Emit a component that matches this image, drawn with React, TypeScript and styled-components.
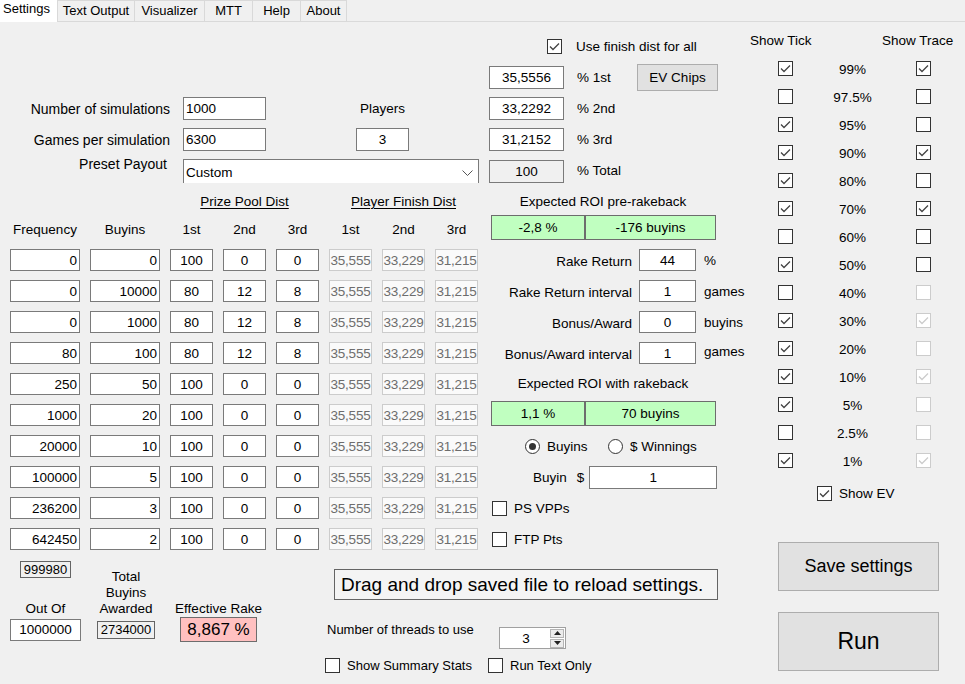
import React from "react";
import styled, { createGlobalStyle, css } from "styled-components";

const GlobalStyle = createGlobalStyle`
  html, body { margin: 0; padding: 0; background: #f0f0f0; }
  body { font-family: "Liberation Sans", Arial, sans-serif; font-size: 13.5px; color: #000; }
  * { box-sizing: border-box; }
`;

type Pos = { $r?: number; $c?: number; $span?: number };
const at = css<Pos>`
  ${(p) => (p.$r ? `grid-row: ${p.$r};` : "")}
  ${(p) => (p.$c ? `grid-column: ${p.$c} / span ${p.$span ?? 1};` : "")}
`;

const Window = styled.div`
  width: 965px;
  height: 684px;
  overflow: hidden;
  display: flex;
  flex-direction: column;
  background: #f0f0f0;
`;

/* ---------- tabs ---------- */
const TabStrip = styled.div`
  display: flex;
  height: 22px;
  flex: none;
`;
const Tab = styled.div<{ $active?: boolean; $w: number; $last?: boolean }>`
  width: ${(p) => p.$w}px;
  height: 22px;
  font-size: 13px;
  line-height: 16px;
  white-space: nowrap;
  ${(p) =>
    p.$active
      ? css`
          background: #fff;
          padding: 1px 0 0 3px;
        `
      : css`
          background: #f0f0f0;
          border: 1px solid #d9d9d9;
          border-right: ${p.$last ? "1px solid #d9d9d9" : "none"};
          text-align: center;
          padding-top: 2px;
        `}
`;
const TabFiller = styled.div`
  flex: 1;
  height: 22px;
  border-bottom: 1px solid #dadada;
`;

const Body = styled.div`
  display: flex;
  flex: 1;
`;
const Main = styled.div`
  width: 740px;
  display: flex;
  flex-direction: column;
`;

/* ---------- common controls ---------- */
const TextBox = styled.input<Pos & { $align?: string; $w?: number; $h?: number; $tone?: "readonly" | "disabled" }>`
  ${at}
  width: ${(p) => (p.$w ? `${p.$w}px` : "100%")};
  height: ${(p) => p.$h ?? 23}px;
  border: 1px solid #7a7a7a;
  background: #fff;
  font: inherit;
  color: #000;
  padding: 0 2px;
  margin: 0;
  text-align: ${(p) => p.$align ?? "left"};
  outline: none;
  align-self: center;
  ${(p) =>
    p.$tone === "readonly" &&
    css`
      background: #f0f0f0;
    `}
  ${(p) =>
    p.$tone === "disabled" &&
    css`
      background: #fafafa;
      border-color: #cccccc;
      color: #6d6d6d;
      padding: 0;
      letter-spacing: -0.2px;
    `}
`;

const BoxSq = styled.span<{ $disabled?: boolean }>`
  width: 15px;
  height: 15px;
  flex: none;
  border: 1px solid ${(p) => (p.$disabled ? "#cccccc" : "#333333")};
  background: #fff;
  display: inline-flex;
  align-items: center;
  justify-content: center;
`;
function Check({ on, disabled }: { on?: boolean; disabled?: boolean }) {
  return (
    <BoxSq $disabled={disabled}>
      {on && (
        <svg width="13" height="13" viewBox="0 0 13 13">
          <polyline
            points="2,6.5 5,9.5 11,3.5"
            fill="none"
            stroke={disabled ? "#cccccc" : "#444444"}
            strokeWidth="1.3"
          />
        </svg>
      )}
    </BoxSq>
  );
}

const RadioDot = styled.span<{ $on?: boolean }>`
  width: 15px;
  height: 15px;
  flex: none;
  border-radius: 50%;
  border: 1px solid #333;
  background: #fff;
  display: inline-flex;
  align-items: center;
  justify-content: center;
  &::after {
    content: "";
    width: 7px;
    height: 7px;
    border-radius: 50%;
    background: ${(p) => (p.$on ? "#333" : "transparent")};
  }
`;

const CheckLabel = styled.label<{ $w?: number; $size?: number }>`
  display: flex;
  align-items: center;
  gap: 7px;
  white-space: nowrap;
  ${(p) => (p.$w ? `width: ${p.$w}px;` : "")}
  ${(p) => (p.$size ? `font-size: ${p.$size}px;` : "")}
`;

const PushButton = styled.button<{ $w: number; $h: number; $size: number }>`
  width: ${(p) => p.$w}px;
  height: ${(p) => p.$h}px;
  background: #e1e1e1;
  border: 1px solid #adadad;
  font-family: inherit;
  font-size: ${(p) => p.$size}px;
  color: #000;
  padding: 0;
  margin: 0;
`;

/* ---------- top area ---------- */
const TopGrid = styled.div`
  display: grid;
  grid-template-columns: 183px 83px 90px 53px 80px 75px 73px 81px;
  grid-template-rows: 24px 23px 23px 23px 24px;
  row-gap: 8px;
  padding: 12px 0 7px;
  align-items: center;
`;
const FieldLabel = styled.div<Pos & { $pr?: number; $raise?: boolean }>`
  ${at}
  text-align: right;
  font-size: 14px;
  padding-right: ${(p) => p.$pr ?? 13}px;
  line-height: 16px;
  white-space: nowrap;
  ${(p) =>
    p.$raise &&
    css`
      align-self: start;
      margin-top: -3px;
    `}
`;
const UnitLabel = styled.div<Pos>`
  ${at}
  padding-left: 13px;
  line-height: 16px;
  white-space: nowrap;
`;
const CenterLabel = styled.div<Pos>`
  ${at}
  text-align: center;
  line-height: 16px;
  white-space: nowrap;
`;
const FinishAll = styled(CheckLabel)<Pos>`
  ${at}
  margin-left: 58px;
  gap: 14px;
`;
const Combo = styled.div<Pos>`
  ${at}
  width: 296px;
  height: 24px;
  align-self: start;
  background: #fff;
  border: 1px solid #7a7a7a;
  border-bottom: none;
  display: flex;
  align-items: center;
  justify-content: space-between;
  padding: 2px 5px 0 2px;
`;
const ButtonCell = styled.div<Pos>`
  ${at}
  display: flex;
  align-items: center;
`;

/* ---------- table + roi ---------- */
const TableGrid = styled.div`
  display: grid;
  grid-template-columns: 70px 70px 43px 43px 43px 43px 43px 43px 230px;
  grid-template-rows: 18px 20px repeat(10, 22px);
  column-gap: 10px;
  row-gap: 9px;
  padding: 3px 0 0 10px;
  height: 360px;
`;
const GroupHeader = styled.div<Pos>`
  ${at}
  text-align: center;
  line-height: 18px;
  text-decoration: underline;
  text-underline-offset: 2px;
  white-space: nowrap;
`;
const ColHeader = styled.div<Pos>`
  ${at}
  text-align: center;
  line-height: 20px;
  white-space: nowrap;
  display: flex;
  justify-content: center;
`;
const RoiTitle = styled.div<Pos>`
  ${at}
  text-align: center;
  line-height: 18px;
  white-space: nowrap;
  align-self: center;
`;
const RoiPair = styled.div<Pos>`
  ${at}
  display: flex;
  align-self: end;
  margin-left: 3px;
  height: 25px;
`;
const RoiValue = styled.div<{ $w: number }>`
  width: ${(p) => p.$w}px;
  height: 25px;
  background: #c0ffc0;
  border: 1px solid #6d6d6d;
  text-align: center;
  line-height: 23px;
`;
const RateRow = styled.div<Pos>`
  ${at}
  display: grid;
  grid-template-columns: 144px 57px auto;
  column-gap: 7px;
  align-items: center;
`;
const RateLabel = styled.div`
  text-align: right;
  white-space: nowrap;
  margin-top: 2px;
`;
const RateUnit = styled.div<{ $lift?: boolean }>`
  padding-left: 1px;
  white-space: nowrap;
  ${(p) => p.$lift && "margin-top: -4px;"}
`;
const RadioRow = styled.div<Pos>`
  ${at}
  display: flex;
  align-items: center;
  padding-left: 37px;
`;
const RadioOption = styled.label<{ $w?: number }>`
  display: flex;
  align-items: center;
  gap: 7px;
  white-space: nowrap;
  ${(p) => (p.$w ? `width: ${p.$w}px;` : "")}
`;
const BuyinRow = styled.div<Pos>`
  ${at}
  display: flex;
  align-items: center;
  padding-left: 45px;
`;
const BuyinText = styled.span<{ $ml?: number }>`
  margin-left: ${(p) => p.$ml ?? 0}px;
  margin-right: 5px;
`;
const OptionCheck = styled(CheckLabel)<Pos>`
  ${at}
  padding-left: 4px;
`;

/* ---------- bottom ---------- */
const BottomArea = styled.div`
  display: flex;
  flex: 1;
`;
const Totals = styled.div`
  display: grid;
  grid-template-columns: 71px 16px 58px 25px 77px;
  grid-template-rows: auto 25px;
  margin-left: 10px;
  padding-top: 11px;
  align-content: start;
`;
const TotalsHead = styled.div<Pos>`
  ${at}
  align-self: end;
  display: flex;
  flex-direction: column;
  align-items: center;
  line-height: 16px;
  white-space: nowrap;
  text-align: center;
`;
const CountBox = styled.div<Pos & { $w: number; $h: number; $mb?: number }>`
  ${at}
  width: ${(p) => p.$w}px;
  height: ${(p) => p.$h}px;
  border: 1px solid #646464;
  font-size: 13px;
  line-height: ${(p) => p.$h - 2}px;
  text-align: center;
  margin-bottom: ${(p) => p.$mb ?? 0}px;
  align-self: center;
`;
const RakeBox = styled.div<Pos>`
  ${at}
  width: 77px;
  height: 25px;
  background: #ffc0c0;
  border: 1px solid #6d6d6d;
  font-size: 17px;
  line-height: 23px;
  text-align: center;
  align-self: center;
`;
const CenterBlock = styled.div`
  margin-left: 68px;
  padding-top: 19px;
  display: flex;
  flex-direction: column;
  font-size: 13px;
`;
const DragBox = styled.div`
  margin-left: 9px;
  width: 384px;
  height: 31px;
  border: 1px solid #646464;
  background: #f4f4f4;
  font-size: 19px;
  line-height: 29px;
  padding-left: 6px;
  white-space: nowrap;
`;
const ThreadsRow = styled.div`
  display: flex;
  align-items: flex-start;
  margin-top: 22px;
  padding-left: 2px;
`;
const ThreadsLabel = styled.div`
  width: 172px;
  line-height: 16px;
  white-space: nowrap;
`;
const Spin = styled.div`
  margin-top: 5px;
  width: 67px;
  height: 22px;
  border: 1px solid #a0a0a0;
  background: #fff;
  display: flex;
  align-items: center;
  padding-right: 1px;
`;
const SpinText = styled.div`
  flex: 1;
  text-align: center;
  font-size: 13.5px;
  padding-left: 2px;
`;
const SpinButtons = styled.div`
  display: flex;
  flex-direction: column;
  gap: 1px;
`;
const SpinBtn = styled.div`
  width: 14px;
  height: 9px;
  background: #ececec;
  border: 1px solid #b5b5b5;
  display: flex;
  align-items: center;
  justify-content: center;
`;
const SummaryRow = styled.div`
  display: flex;
  margin-top: 9px;
  height: 15px;
`;

/* ---------- right panel ---------- */
const RightPanel = styled.div`
  width: 225px;
  display: flex;
  flex-direction: column;
`;
const TickHeader = styled.div`
  display: grid;
  grid-template-columns: 132px auto;
  padding: 11px 0 0 10px;
  line-height: 16px;
`;
const TickList = styled.div`
  margin-top: 5px;
  display: flex;
  flex-direction: column;
`;
const TickRow = styled.div`
  display: grid;
  grid-template-columns: 15px 123px 15px;
  padding-left: 38px;
  height: 28px;
  align-items: center;
`;
const PctLabel = styled.div`
  text-align: center;
  padding-right: 4px;
  margin-top: 2px;
`;
const ShowEv = styled(CheckLabel)`
  margin: 12px 0 0 77px;
  height: 15px;
`;
const RightButtons = styled.div`
  display: flex;
  flex-direction: column;
  padding-left: 38px;
  margin-top: 41px;
  gap: 21px;
`;

const rows: string[][] = [
  ["0", "0", "100", "0", "0"],
  ["0", "10000", "80", "12", "8"],
  ["0", "1000", "80", "12", "8"],
  ["80", "100", "80", "12", "8"],
  ["250", "50", "100", "0", "0"],
  ["1000", "20", "100", "0", "0"],
  ["20000", "10", "100", "0", "0"],
  ["100000", "5", "100", "0", "0"],
  ["236200", "3", "100", "0", "0"],
  ["642450", "2", "100", "0", "0"],
];

const ticks: [string, boolean, boolean, boolean][] = [
  ["99%", true, true, false],
  ["97.5%", false, false, false],
  ["95%", true, false, false],
  ["90%", true, true, false],
  ["80%", true, false, false],
  ["70%", true, true, false],
  ["60%", false, false, false],
  ["50%", true, false, false],
  ["40%", false, false, true],
  ["30%", true, true, true],
  ["20%", true, false, true],
  ["10%", true, true, true],
  ["5%", true, false, true],
  ["2.5%", false, false, true],
  ["1%", true, true, true],
];

const tabs = [
  { name: "Text Output", w: 77 },
  { name: "Visualizer", w: 70 },
  { name: "MTT", w: 48 },
  { name: "Help", w: 48 },
  { name: "About", w: 47 },
];

export default function App() {
  return (
    <>
      <GlobalStyle />
      <Window>
        <TabStrip>
          <Tab $active $w={57}>Settings</Tab>
          {tabs.map((t, i) => (
            <Tab key={t.name} $w={t.w} $last={i === tabs.length - 1}>
              {t.name}
            </Tab>
          ))}
          <TabFiller />
        </TabStrip>

        <Body>
          <Main>
            <TopGrid>
              <FinishAll $r={1} $c={6} $span={3}>
                <Check on />
                Use finish dist for all
              </FinishAll>

              <TextBox $r={2} $c={6} $align="center" value="35,5556" readOnly />
              <UnitLabel $r={2} $c={7}>% 1st</UnitLabel>
              <ButtonCell $r={2} $c={8}>
                <PushButton $w={81} $h={27} $size={13.5}>EV Chips</PushButton>
              </ButtonCell>

              <FieldLabel $r={3} $c={1}>Number of simulations</FieldLabel>
              <TextBox $r={3} $c={2} value="1000" readOnly />
              <CenterLabel $r={3} $c={4}>Players</CenterLabel>
              <TextBox $r={3} $c={6} $align="center" value="33,2292" readOnly />
              <UnitLabel $r={3} $c={7}>% 2nd</UnitLabel>

              <FieldLabel $r={4} $c={1}>Games per simulation</FieldLabel>
              <TextBox $r={4} $c={2} value="6300" readOnly />
              <TextBox $r={4} $c={4} $align="center" value="3" readOnly />
              <TextBox $r={4} $c={6} $align="center" value="31,2152" readOnly />
              <UnitLabel $r={4} $c={7}>% 3rd</UnitLabel>

              <FieldLabel $r={5} $c={1} $pr={16} $raise>Preset Payout</FieldLabel>
              <Combo $r={5} $c={2} $span={4}>
                <span>Custom</span>
                <svg width="11" height="6" viewBox="0 0 11 6">
                  <polyline points="0.5,0.5 5.5,5.5 10.5,0.5" fill="none" stroke="#555" strokeWidth="1" />
                </svg>
              </Combo>
              <TextBox $r={5} $c={6} $align="center" $tone="readonly" value="100" readOnly />
              <UnitLabel $r={5} $c={7}>% Total</UnitLabel>
            </TopGrid>

            <TableGrid>
              <GroupHeader $r={1} $c={3} $span={3}>Prize Pool Dist</GroupHeader>
              <GroupHeader $r={1} $c={6} $span={3}>Player Finish Dist</GroupHeader>
              {["Frequency", "Buyins", "1st", "2nd", "3rd", "1st", "2nd", "3rd"].map((h, i) => (
                <ColHeader key={i} $r={2} $c={i + 1}>
                  {h}
                </ColHeader>
              ))}
              {rows.map((r, ri) => (
                <React.Fragment key={ri}>
                  <TextBox $r={ri + 3} $c={1} $h={22} $align="right" value={r[0]} readOnly />
                  <TextBox $r={ri + 3} $c={2} $h={22} $align="right" value={r[1]} readOnly />
                  <TextBox $r={ri + 3} $c={3} $h={22} $align="center" value={r[2]} readOnly />
                  <TextBox $r={ri + 3} $c={4} $h={22} $align="center" value={r[3]} readOnly />
                  <TextBox $r={ri + 3} $c={5} $h={22} $align="center" value={r[4]} readOnly />
                  <TextBox $r={ri + 3} $c={6} $h={22} $align="center" $tone="disabled" value="35,555" readOnly />
                  <TextBox $r={ri + 3} $c={7} $h={22} $align="center" $tone="disabled" value="33,229" readOnly />
                  <TextBox $r={ri + 3} $c={8} $h={22} $align="center" $tone="disabled" value="31,215" readOnly />
                </React.Fragment>
              ))}

              <RoiTitle $r={1} $c={9}>Expected ROI pre-rakeback</RoiTitle>
              <RoiPair $r={2} $c={9}>
                <RoiValue $w={94}>-2,8 %</RoiValue>
                <RoiValue $w={131}>-176 buyins</RoiValue>
              </RoiPair>
              <RateRow $r={3} $c={9}>
                <RateLabel>Rake Return</RateLabel>
                <TextBox $h={22} $align="center" value="44" readOnly />
                <RateUnit>%</RateUnit>
              </RateRow>
              <RateRow $r={4} $c={9}>
                <RateLabel>Rake Return interval</RateLabel>
                <TextBox $h={22} $align="center" value="1" readOnly />
                <RateUnit>games</RateUnit>
              </RateRow>
              <RateRow $r={5} $c={9}>
                <RateLabel>Bonus/Award</RateLabel>
                <TextBox $h={22} $align="center" value="0" readOnly />
                <RateUnit>buyins</RateUnit>
              </RateRow>
              <RateRow $r={6} $c={9}>
                <RateLabel>Bonus/Award interval</RateLabel>
                <TextBox $h={22} $align="center" value="1" readOnly />
                <RateUnit $lift>games</RateUnit>
              </RateRow>
              <RoiTitle $r={7} $c={9}>Expected ROI with rakeback</RoiTitle>
              <RoiPair $r={8} $c={9}>
                <RoiValue $w={94}>1,1 %</RoiValue>
                <RoiValue $w={131}>70 buyins</RoiValue>
              </RoiPair>
              <RadioRow $r={9} $c={9}>
                <RadioOption $w={83}>
                  <RadioDot $on />
                  Buyins
                </RadioOption>
                <RadioOption>
                  <RadioDot />$ Winnings
                </RadioOption>
              </RadioRow>
              <BuyinRow $r={10} $c={9}>
                <BuyinText>Buyin</BuyinText>
                <BuyinText $ml={5}>$</BuyinText>
                <TextBox $w={128} $h={23} $align="center" value="1" readOnly />
              </BuyinRow>
              <OptionCheck $r={11} $c={9}>
                <Check />
                PS VPPs
              </OptionCheck>
              <OptionCheck $r={12} $c={9}>
                <Check />
                FTP Pts
              </OptionCheck>
            </TableGrid>

            <BottomArea>
              <Totals>
                <TotalsHead $r={1} $c={1}>
                  <CountBox $w={51} $h={17} $mb={23}>999980</CountBox>
                  <span>Out Of</span>
                </TotalsHead>
                <TotalsHead $r={1} $c={3}>
                  <span>Total</span>
                  <span>Buyins</span>
                  <span>Awarded</span>
                </TotalsHead>
                <TotalsHead $r={1} $c={5}>
                  <span>Effective Rake</span>
                </TotalsHead>
                <TextBox $r={2} $c={1} $h={22} $align="center" value="1000000" readOnly />
                <CountBox $r={2} $c={3} $w={58} $h={18}>2734000</CountBox>
                <RakeBox $r={2} $c={5}>8,867 %</RakeBox>
              </Totals>

              <CenterBlock>
                <DragBox>Drag and drop saved file to reload settings.</DragBox>
                <ThreadsRow>
                  <ThreadsLabel>Number of threads to use</ThreadsLabel>
                  <Spin>
                    <SpinText>3</SpinText>
                    <SpinButtons>
                      <SpinBtn>
                        <svg width="7" height="4" viewBox="0 0 7 4">
                          <polygon points="0,4 3.5,0 7,4" fill="#222" />
                        </svg>
                      </SpinBtn>
                      <SpinBtn>
                        <svg width="7" height="4" viewBox="0 0 7 4">
                          <polygon points="0,0 3.5,4 7,0" fill="#222" />
                        </svg>
                      </SpinBtn>
                    </SpinButtons>
                  </Spin>
                </ThreadsRow>
                <SummaryRow>
                  <CheckLabel $w={163}>
                    <Check />
                    Show Summary Stats
                  </CheckLabel>
                  <CheckLabel>
                    <Check />
                    Run Text Only
                  </CheckLabel>
                </SummaryRow>
              </CenterBlock>
            </BottomArea>
          </Main>

          <RightPanel>
            <TickHeader>
              <span>Show Tick</span>
              <span>Show Trace</span>
            </TickHeader>
            <TickList>
              {ticks.map(([pct, tick, trace, dis]) => (
                <TickRow key={pct}>
                  <Check on={tick} />
                  <PctLabel>{pct}</PctLabel>
                  <Check on={trace} disabled={dis} />
                </TickRow>
              ))}
            </TickList>
            <ShowEv>
              <Check on />
              Show EV
            </ShowEv>
            <RightButtons>
              <PushButton $w={161} $h={49} $size={18}>Save settings</PushButton>
              <PushButton $w={161} $h={59} $size={23}>Run</PushButton>
            </RightButtons>
          </RightPanel>
        </Body>
      </Window>
    </>
  );
}
